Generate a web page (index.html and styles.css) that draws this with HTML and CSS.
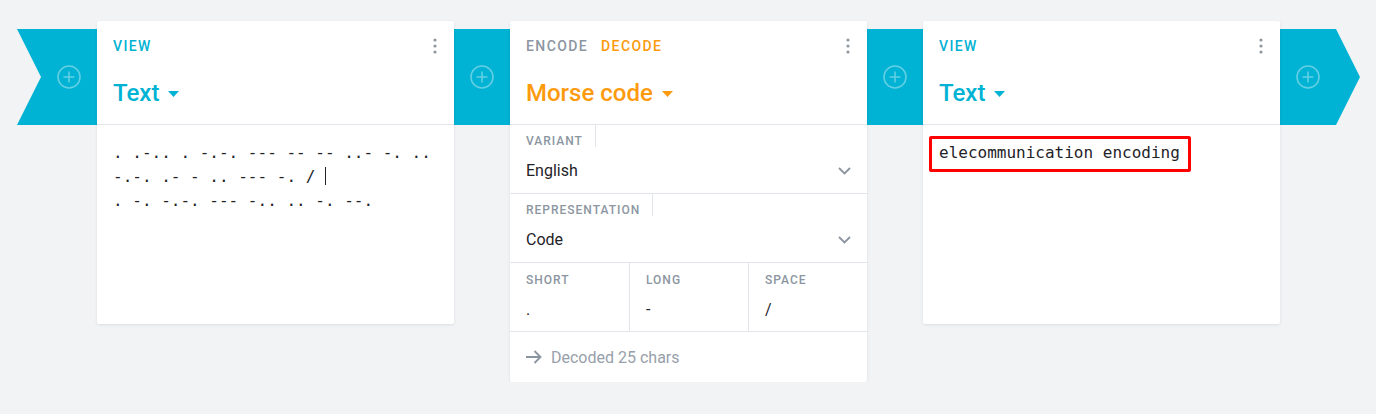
FILE: index.html
```html
<!DOCTYPE html>
<html lang="en">
<head>
<meta charset="utf-8">
<title>Pipeline</title>
<link rel="stylesheet" href="styles.css">
</head>
<body>
<div class="pipeline">
  <div class="band tail">
    <svg class="plus" width="24" height="24" viewBox="0 0 24 24"><circle cx="12" cy="12" r="11" fill="none" stroke="currentColor" stroke-width="1.6"/><path d="M12 6.5v11M6.5 12h11" stroke="currentColor" stroke-width="1.6" fill="none"/></svg>
  </div>

  <section class="card card-view">
    <header class="card-head">
      <div class="head-top">
        <span class="kind kind-view">View</span>
        <svg class="menu" width="4" height="16" viewBox="0 0 4 16"><circle cx="2" cy="2" r="1.6"/><circle cx="2" cy="8" r="1.6"/><circle cx="2" cy="14" r="1.6"/></svg>
      </div>
      <div class="title title-view">Text<svg class="tri" width="11" height="6" viewBox="0 0 11 6"><path d="M0 0h11L5.5 6z"/></svg></div>
    </header>
    <div class="content mono">. .-.. . -.-. --- -- -- ..- -. ..
-.-. .- - .. --- -. / <span class="caret"></span>
. -. -.-. --- -.. .. -. --.</div>
  </section>

  <div class="band link">
    <svg class="plus" width="24" height="24" viewBox="0 0 24 24"><circle cx="12" cy="12" r="11" fill="none" stroke="currentColor" stroke-width="1.6"/><path d="M12 6.5v11M6.5 12h11" stroke="currentColor" stroke-width="1.6" fill="none"/></svg>
  </div>

  <section class="card card-coder">
    <header class="card-head">
      <div class="head-top">
        <span class="modes"><span class="kind kind-muted">Encode</span><span class="kind kind-active">Decode</span></span>
        <svg class="menu" width="4" height="16" viewBox="0 0 4 16"><circle cx="2" cy="2" r="1.6"/><circle cx="2" cy="8" r="1.6"/><circle cx="2" cy="14" r="1.6"/></svg>
      </div>
      <div class="title title-coder">Morse code<svg class="tri" width="11" height="6" viewBox="0 0 11 6"><path d="M0 0h11L5.5 6z"/></svg></div>
    </header>
    <div class="field">
      <span class="label">Variant</span>
      <div class="value">English<svg class="chev" width="13" height="8" viewBox="0 0 13 8"><path d="M1 1l5.5 5.5L12 1" fill="none" stroke="currentColor" stroke-width="1.8"/></svg></div>
    </div>
    <div class="field">
      <span class="label">Representation</span>
      <div class="value">Code<svg class="chev" width="13" height="8" viewBox="0 0 13 8"><path d="M1 1l5.5 5.5L12 1" fill="none" stroke="currentColor" stroke-width="1.8"/></svg></div>
    </div>
    <div class="field-row">
      <div class="col">
        <span class="label plain">Short</span>
        <div class="value">.</div>
      </div>
      <div class="col">
        <span class="label plain">Long</span>
        <div class="value">-</div>
      </div>
      <div class="col">
        <span class="label plain">Space</span>
        <div class="value">/</div>
      </div>
    </div>
    <footer class="status">
      <svg class="arrow" width="16" height="14" viewBox="0 0 16 14"><path d="M0 7h14.5M8.5 1l6 6-6 6" fill="none" stroke="currentColor" stroke-width="1.8"/></svg>
      <span>Decoded 25 chars</span>
    </footer>
  </section>

  <div class="band link">
    <svg class="plus" width="24" height="24" viewBox="0 0 24 24"><circle cx="12" cy="12" r="11" fill="none" stroke="currentColor" stroke-width="1.6"/><path d="M12 6.5v11M6.5 12h11" stroke="currentColor" stroke-width="1.6" fill="none"/></svg>
  </div>

  <section class="card card-view">
    <header class="card-head">
      <div class="head-top">
        <span class="kind kind-view">View</span>
        <svg class="menu" width="4" height="16" viewBox="0 0 4 16"><circle cx="2" cy="2" r="1.6"/><circle cx="2" cy="8" r="1.6"/><circle cx="2" cy="14" r="1.6"/></svg>
      </div>
      <div class="title title-view">Text<svg class="tri" width="11" height="6" viewBox="0 0 11 6"><path d="M0 0h11L5.5 6z"/></svg></div>
    </header>
    <div class="content mono"><span class="highlight">elecommunication encoding</span></div>
  </section>

  <div class="band head">
    <svg class="plus" width="24" height="24" viewBox="0 0 24 24"><circle cx="12" cy="12" r="11" fill="none" stroke="currentColor" stroke-width="1.6"/><path d="M12 6.5v11M6.5 12h11" stroke="currentColor" stroke-width="1.6" fill="none"/></svg>
  </div>
</div>
</body>
</html>
```

FILE: styles.css
```css
* { box-sizing: border-box; }

html, body {
  margin: 0;
  background: #f2f3f5;
  font-family: Roboto, "Noto Sans", sans-serif;
  color: #22262b;
}

.pipeline {
  display: flex;
  align-items: flex-start;
  padding: 21px 0 0 17px;
}

.band {
  flex: none;
  margin-top: 8px;
  height: 96px;
  background: #00b2d3;
  color: rgba(255, 255, 255, 0.38);
  display: flex;
  align-items: center;
}

.tail {
  width: 80px;
  justify-content: flex-end;
  padding-right: 16px;
  clip-path: polygon(0 0, 100% 0, 100% 100%, 0 100%, 24px 50%);
}

.link {
  width: 56px;
  justify-content: center;
}

.head {
  width: 80px;
  padding-left: 16px;
  clip-path: polygon(0 0, 56px 0, 80px 50%, 56px 100%, 0 100%);
}

.plus { display: block; }

.card {
  flex: none;
  width: 357px;
  background: #fff;
  border-radius: 2px;
  box-shadow: 0 1px 3px rgba(30, 40, 60, 0.1);
  position: relative;
  z-index: 1;
}

.card-head {
  height: 104px;
  padding: 15px 16px 0 16px;
  border-bottom: 1px solid #e2e5e9;
}

.head-top {
  display: flex;
  justify-content: space-between;
  align-items: center;
  height: 20px;
}

.menu {
  fill: #8f979f;
  margin-right: 1px;
}

.kind {
  font-size: 14px;
  font-weight: 500;
  letter-spacing: 1.4px;
  text-transform: uppercase;
  line-height: 20px;
}

.kind-view { color: #00b2d3; }
.kind-muted { color: #8c96a1; margin-right: 13px; }
.kind-active { color: #fd9a0d; }

.title {
  margin-top: 21px;
  font-size: 24px;
  font-weight: 500;
  line-height: 32px;
  display: flex;
  align-items: center;
}

.title-view { color: #00b2d3; }
.title-coder { color: #fd9a0d; }

.tri {
  margin-left: 9px;
  margin-top: 1px;
  fill: currentColor;
}

.content {
  min-height: 199px;
  padding: 16px;
}

.mono {
  font-family: "DejaVu Sans Mono", "Liberation Mono", monospace;
  font-size: 16px;
  line-height: 24px;
  white-space: pre-wrap;
  color: #1f2328;
}

.caret {
  display: inline-block;
  width: 0;
  height: 18px;
  border-left: 1.3px solid #1f2328;
  vertical-align: -3px;
}

.highlight {
  position: relative;
}

.highlight::after {
  content: "";
  position: absolute;
  left: -10px;
  right: -11px;
  top: -7px;
  bottom: -10px;
  border: 3px solid #ff0000;
  border-radius: 2px;
}

.field {
  height: 69px;
  border-bottom: 1px solid #e2e5e9;
}

.label {
  display: inline-block;
  padding: 10px 12px 0 16px;
  height: 22px;
  border-right: 1px solid #e2e5e9;
  font-size: 12px;
  line-height: 13px;
  font-weight: 500;
  letter-spacing: 1px;
  text-transform: uppercase;
  color: #8c96a1;
}

.label.plain { border-right: none; }

.value {
  margin-top: 10px;
  padding: 0 16px;
  height: 24px;
  font-size: 16px;
  line-height: 24px;
  display: flex;
  justify-content: space-between;
  align-items: center;
  color: #1f2328;
}

.chev {
  color: #8c959f;
  margin-right: 0;
}

.field-row {
  display: grid;
  grid-template-columns: 119px 119px 119px;
  height: 69px;
  border-bottom: 1px solid #e2e5e9;
}

.col + .col { border-left: 1px solid #e2e5e9; }

.col .label { padding-top: 11px; }
.col .value { margin-top: 10px; }

.status {
  height: 50px;
  padding: 0 16px;
  display: flex;
  align-items: center;
  gap: 9px;
  font-size: 16px;
  color: #97a0aa;
}

.arrow { color: #8c959f; }
```
